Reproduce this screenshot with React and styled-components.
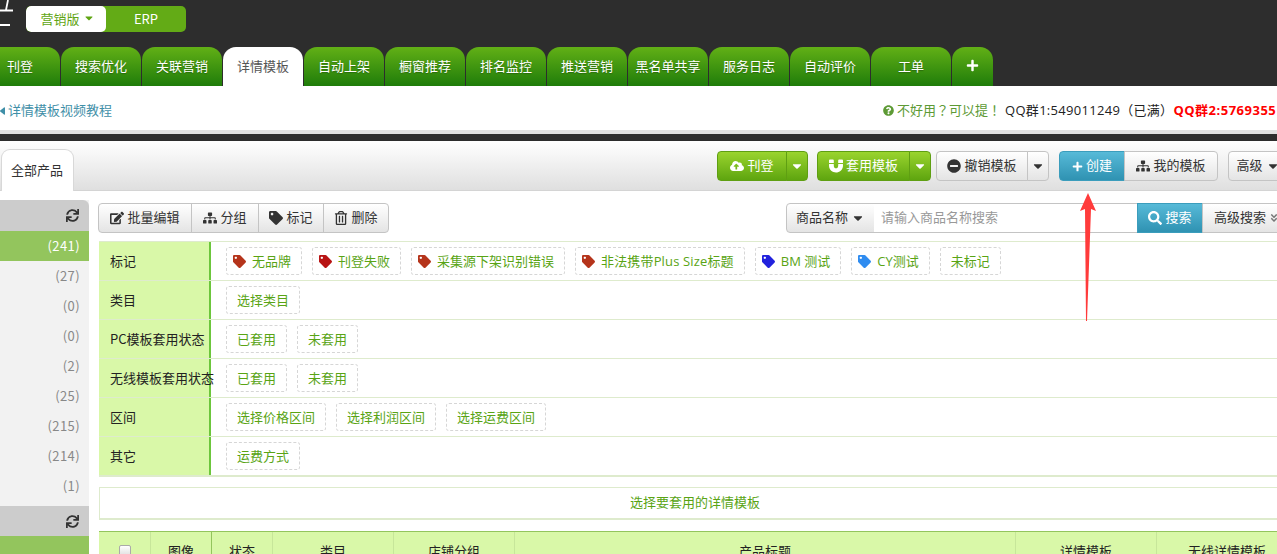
import React from 'react';
import styled, { createGlobalStyle } from 'styled-components';
import {
  FaAngleDoubleDown,
  FaBackward,
  FaCaretDown,
  FaCloudUploadAlt,
  FaEdit,
  FaMagnet,
  FaMinusCircle,
  FaPlus,
  FaQuestionCircle,
  FaRegTrashAlt,
  FaSearch,
  FaSitemap,
  FaSync,
  FaTag,
} from 'react-icons/fa';

const GlobalStyle = createGlobalStyle`
  html, body {
    margin: 0;
    padding: 0;
    overflow: hidden;
    height: 554px;
    background: #fff;
  }
  body {
    font-family: "Noto Sans CJK SC", "Liberation Sans", sans-serif;
    font-size: 13px;
    color: #333;
  }
  * { box-sizing: border-box; }
`;

/* the page was scrolled 20px to the right when photographed */
const Page = styled.div`
  position: relative;
  width: 1311px;
  margin-left: -20px;
`;

const TopBar = styled.header`
  height: 86px;
  background: #2d2d2d;
  display: flex;
  flex-direction: column;
`;

const TopRow = styled.div`
  height: 47px;
  padding-left: 20px;
  display: flex;
  align-items: flex-start;
  gap: 12px;
`;

const Logo = styled.svg`
  width: 14px;
  height: 27px;
`;

const Switch = styled.div`
  display: flex;
  width: 160px;
  height: 26px;
  margin-top: 6px;
  border-radius: 5px;
  overflow: hidden;
  background: #63ab16;
`;

const SwitchItem = styled.div`
  flex: ${p => (p.$active ? '0 0 80px' : '1')};
  display: flex;
  align-items: center;
  justify-content: center;
  gap: 3px;
  font-size: 13px;
  padding: ${p => (p.$active ? '0 0 2px 3px' : '0 0 2px')};
  border-radius: ${p => (p.$active ? '5px' : '0')};
  background: ${p => (p.$active ? '#fff' : 'transparent')};
  color: ${p => (p.$active ? '#5fa512' : '#fff')};
  svg { font-size: 12px; }
`;

const Tabs = styled.nav`
  display: flex;
  gap: 1px;
  height: 39px;
`;

const Tab = styled.div`
  width: ${p => (p.$narrow ? '41px' : '80px')};
  height: 39px;
  padding-bottom: 2px;
  border-radius: 13px 13px 0 0;
  display: flex;
  align-items: center;
  justify-content: center;
  font-size: 13px;
  background: ${p => (p.$active ? '#fff' : 'linear-gradient(#62b016, #1f7c0a)')};
  color: ${p => (p.$active ? '#555' : '#fff')};
  text-shadow: ${p => (p.$active ? 'none' : '0 1px 1px rgba(0,0,0,.25)')};
`;

const SubBar = styled.div`
  height: 44px;
  background: #fff;
  display: flex;
  align-items: center;
  justify-content: space-between;
  padding: 3px 0 0 15px;
  white-space: nowrap;
`;

const VideoLink = styled.a`
  display: flex;
  align-items: center;
  gap: 3px;
  color: #3f8fa8;
  font-size: 13px;
  svg { font-size: 10px; margin-top: 2px; }
`;

const Notice = styled.div`
  display: flex;
  align-items: center;
  width: 394px;
  overflow: hidden;
  margin-right: 14px;
`;

const NoticeLink = styled.span`
  display: flex;
  align-items: center;
  gap: 3px;
  font-family: "Noto Sans CJK TC", sans-serif;
  color: #5d9a35;
  margin-right: 4px;
  svg { font-size: 11px; flex: none; margin-top: 2px; }
`;

const Group = styled.span`
  font-family: "Open Sans", "Noto Sans CJK TC", sans-serif;
  color: ${p => (p.$strong ? '#f00' : '#222')};
  font-weight: ${p => (p.$strong ? 700 : 400)};
  letter-spacing: ${p => (p.$strong ? '.5px' : '.3px')};
  flex: none;
`;

const Divider = styled.div`
  height: 11px;
  background: #2d2d2d;
  border-top: 4px solid #e0e0e0;
`;

const PanelBar = styled.div`
  height: 50px;
  background: linear-gradient(#fff, #dfdfdf);
  border-bottom: 1px solid #d4d4d4;
  display: flex;
  align-items: flex-end;
  justify-content: space-between;
  padding: 0 3px 0 21px;
`;

const PanelTab = styled.div`
  width: 73px;
  height: 42px;
  margin-bottom: -1px;
  padding: 0 1px 3px 0;
  background: #fff;
  border: 1px solid #d8d8d8;
  border-bottom: none;
  border-radius: 9px 9px 0 0;
  display: flex;
  align-items: center;
  justify-content: center;
  color: #333;
`;

const Actions = styled.div`
  display: flex;
  align-self: flex-start;
  margin-top: 10px;
`;

const BtnGroup = styled.div`
  display: flex;
  height: 30px;
  margin-left: ${p => p.$gap || 0}px;
`;

const Btn = styled.div`
  width: ${p => p.$w}px;
  height: 30px;
  display: flex;
  align-items: center;
  justify-content: center;
  gap: 3px;
  padding-bottom: 3px;
  font-size: 13px;
  white-space: nowrap;
  border: 1px solid;
  margin-left: -1px;
  &:first-child { margin-left: 0; border-radius: 4px 0 0 4px; }
  &:last-child { border-radius: 0 4px 4px 0; }
  &:only-child { border-radius: 4px; }
  svg { font-size: 14px; flex: none; margin-top: 3px; }
  ${p => p.$kind === 'green' && `
    background: linear-gradient(#9ad42e, #5ea50f);
    border-color: #5f9f12;
    color: #fff;
  `}
  ${p => p.$kind === 'blue' && `
    background: linear-gradient(#57bad8, #2f92b2);
    border-color: #3b9dbc;
    color: #fff;
  `}
  ${p => (!p.$kind || p.$kind === 'plain') && `
    background: linear-gradient(#fff, #e4e4e4);
    border-color: #c4c4c4;
    color: #333;
  `}
`;

const AdvancedBtn = styled(Btn)`
  svg { font-size: 10px; color: #777; }
`;

const Body = styled.div`
  display: flex;
  align-items: flex-start;
`;

const Sidebar = styled.aside`
  flex: 0 0 109px;
  margin-top: 9px;
  background: #f2f2f2;
`;

const SideHead = styled.div`
  height: ${p => (p.$round ? '31px' : '30px')};
  margin-top: ${p => (p.$round ? '0' : '5px')};
  background: #ccc;
  border-radius: ${p => (p.$round ? '0 6px 0 0' : '0')};
  display: flex;
  align-items: center;
  justify-content: flex-end;
  padding-right: 10px;
  color: #333;
  svg { font-size: 13px; }
`;

const SideRow = styled.div`
  height: 30px;
  padding: 0 9px 2px 0;
  letter-spacing: .4px;
  display: flex;
  align-items: center;
  justify-content: flex-end;
  background: ${p => (p.$active ? '#93c55d' : 'transparent')};
  color: ${p => (p.$active ? '#fff' : '#888')};
`;

const Main = styled.main`
  flex: 1;
  min-width: 0;
  margin-left: 9px;
  padding-top: 12px;
`;

const ToolRow = styled.div`
  display: flex;
  justify-content: space-between;
`;

const SearchInput = styled.div`
  width: 264px;
  height: 30px;
  margin-left: -1px;
  padding: 0 0 3px 7px;
  background: #fff;
  border: 1px solid #c4c4c4;
  border-left: none;
  display: flex;
  align-items: center;
  color: #999;
`;

const Filters = styled.section`
  margin: 8px 0 0 1px;
  border-top: 1px solid #deebcd;
  border-bottom: 2px solid #deebcd;
`;

const FilterRow = styled.div`
  display: flex;
  height: 39px;
  border-bottom: 1px solid #deebcd;
  &:last-child { border-bottom: none; height: 38px; }
`;

const FilterLabel = styled.div`
  flex: 0 0 112px;
  min-width: 0;
  background: #d9f8a8;
  border-right: 2px solid #6cc63c;
  display: flex;
  align-items: center;
  padding: 0 0 2px 11px;
  color: #222;
  white-space: nowrap;
`;

const Chips = styled.div`
  display: flex;
  align-items: flex-start;
  gap: 10px;
  padding: 5px 0 0 15px;
`;

const Chip = styled.div`
  height: 28px;
  display: flex;
  align-items: center;
  gap: 6px;
  padding: ${p => (p.$tag ? '0 10px 2px 6px' : '0 10px 2px')};
  border: 1px dashed #d6d6d6;
  border-radius: 3px;
  font-family: "Open Sans", "Noto Sans CJK SC", sans-serif;
  color: #59a414;
  white-space: nowrap;
  letter-spacing: ${p => (p.$wide ? '.15px' : '0')};
  svg { font-size: 13px; color: ${p => p.$tag}; margin-top: 2px; }
`;

const TemplateBox = styled.div`
  margin: 10px 0 0 1px;
  height: 33px;
  padding-bottom: 3px;
  border: 1px solid #deebcd;
  border-width: 1px 1px 2px 1px;
  display: flex;
  align-items: center;
  justify-content: center;
  color: #59a414;
`;

const HeadRow = styled.div`
  display: flex;
  height: 40px;
  margin: 11px 0 0 1px;
  background: #d9f8a8;
  border-top: 1px solid #93c55d;
`;

const HeadCell = styled.div`
  width: ${p => p.$w}px;
  flex: none;
  padding-bottom: 2px;
  display: flex;
  align-items: center;
  justify-content: center;
  color: #222;
  border-right: 1px solid ${p => (p.$strong ? '#93c55d' : '#c7e69a')};
`;

const CheckBox = styled.div`
  width: 12px;
  height: 12px;
  border: 1px solid #aaa;
  border-radius: 2px;
  background: linear-gradient(#fff, #ddd);
`;

const Arrow = styled.svg`
  position: absolute;
  left: 1099px;
  top: 191px;
  width: 18px;
  height: 131px;
`;

const tabs = ['刊登', '搜索优化', '关联营销', '详情模板', '自动上架', '橱窗推荐', '排名监控', '推送营销', '黑名单共享', '服务日志', '自动评价', '工单'];
const counts = [27, 0, 0, 2, 25, 215, 214, 1];
const tagChips = [
  ['无品牌', '#b5341b'],
  ['刊登失败', '#b81414'],
  ['采集源下架识别错误', '#b5341b'],
  ['非法携带Plus Size标题', '#b5341b', true],
  ['BM 测试', '#2222dd'],
  ['CY测试', '#2f8cf0'],
];
const filterRows = [
  ['类目', ['选择类目']],
  ['PC模板套用状态', ['已套用', '未套用']],
  ['无线模板套用状态', ['已套用', '未套用']],
  ['区间', ['选择价格区间', '选择利润区间', '选择运费区间']],
  ['其它', ['运费方式']],
];
const columns = [
  ['图像', 61, true],
  ['状态', 61],
  ['类目', 121],
  ['店铺分组', 121],
  ['产品标题', 501],
  ['详情模板', 141],
  ['无线详情模板', 141],
];

export default function App() {
  return (
    <Page>
      <GlobalStyle />
      <TopBar>
        <TopRow>
          <Logo viewBox="0 0 14 27">
            <path d="M0 10.5h13M8 0L6 10M0 25h10" stroke="#fff" strokeWidth="1.8" fill="none" />
          </Logo>
          <Switch>
            <SwitchItem $active>营销版 <FaCaretDown /></SwitchItem>
            <SwitchItem>ERP</SwitchItem>
          </Switch>
        </TopRow>
        <Tabs>
          {tabs.map(t => (
            <Tab key={t} $active={t === '详情模板'}>{t}</Tab>
          ))}
          <Tab $narrow><FaPlus size={13} /></Tab>
        </Tabs>
      </TopBar>

      <SubBar>
        <VideoLink><FaBackward /> 详情模板视频教程</VideoLink>
        <Notice>
          <NoticeLink><FaQuestionCircle /> 不好用？可以提！</NoticeLink>
          <Group>QQ群1:549011249（已满）</Group>
          <Group $strong>QQ群2:5769355</Group>
        </Notice>
      </SubBar>
      <Divider />

      <PanelBar>
        <PanelTab>全部产品</PanelTab>
        <Actions>
          <BtnGroup>
            <Btn $kind="green" $w={70}><FaCloudUploadAlt /> 刊登</Btn>
            <Btn $kind="green" $w={22}><FaCaretDown /></Btn>
          </BtnGroup>
          <BtnGroup $gap={9}>
            <Btn $kind="green" $w={93}><FaMagnet /> 套用模板</Btn>
            <Btn $kind="green" $w={22}><FaCaretDown /></Btn>
          </BtnGroup>
          <BtnGroup $gap={5}>
            <Btn $w={92}><FaMinusCircle /> 撤销模板</Btn>
            <Btn $w={22}><FaCaretDown /></Btn>
          </BtnGroup>
          <BtnGroup $gap={10}>
            <Btn $kind="blue" $w={66}><FaPlus size={11} /> 创建</Btn>
            <Btn $w={94}><FaSitemap /> 我的模板</Btn>
          </BtnGroup>
          <BtnGroup $gap={10}>
            <Btn $w={60}>高级 <FaCaretDown /></Btn>
          </BtnGroup>
        </Actions>
      </PanelBar>

      <Body>
        <Sidebar>
          <SideHead $round><FaSync /></SideHead>
          <SideRow $active>(241)</SideRow>
          {counts.map((c, i) => (
            <SideRow key={i}>({c})</SideRow>
          ))}
          <SideHead><FaSync /></SideHead>
          <SideRow $active />
        </Sidebar>

        <Main>
          <ToolRow>
            <BtnGroup>
              <Btn $w={94}><FaEdit /> 批量编辑</Btn>
              <Btn $w={68}><FaSitemap /> 分组</Btn>
              <Btn $w={66}><FaTag /> 标记</Btn>
              <Btn $w={66}><FaRegTrashAlt /> 删除</Btn>
            </BtnGroup>
            <BtnGroup>
              <Btn $w={89}>商品名称 <FaCaretDown /></Btn>
              <SearchInput>请输入商品名称搜索</SearchInput>
              <Btn $kind="blue" $w={66}><FaSearch /> 搜索</Btn>
              <AdvancedBtn $w={89}>高级搜索 <FaAngleDoubleDown /></AdvancedBtn>
            </BtnGroup>
          </ToolRow>

          <Filters>
            <FilterRow>
              <FilterLabel>标记</FilterLabel>
              <Chips>
                {tagChips.map(([name, color, wide]) => (
                  <Chip key={name} $tag={color} $wide={wide}><FaTag /> {name}</Chip>
                ))}
                <Chip>未标记</Chip>
              </Chips>
            </FilterRow>
            {filterRows.map(([label, items]) => (
              <FilterRow key={label}>
                <FilterLabel>{label}</FilterLabel>
                <Chips>
                  {items.map(item => (
                    <Chip key={item}>{item}</Chip>
                  ))}
                </Chips>
              </FilterRow>
            ))}
          </Filters>

          <TemplateBox>选择要套用的详情模板</TemplateBox>

          <HeadRow>
            <HeadCell $w={52}><CheckBox /></HeadCell>
            {columns.map(([name, w, strong]) => (
              <HeadCell key={name} $w={w} $strong={strong}>{name}</HeadCell>
            ))}
          </HeadRow>
        </Main>
      </Body>

      <Arrow viewBox="0 0 18 131">
        <path d="M9 2L17 20L12 18L8 130L7 130L6 18L1 20Z" fill="#ff3b3b" />
      </Arrow>
    </Page>
  );
}
